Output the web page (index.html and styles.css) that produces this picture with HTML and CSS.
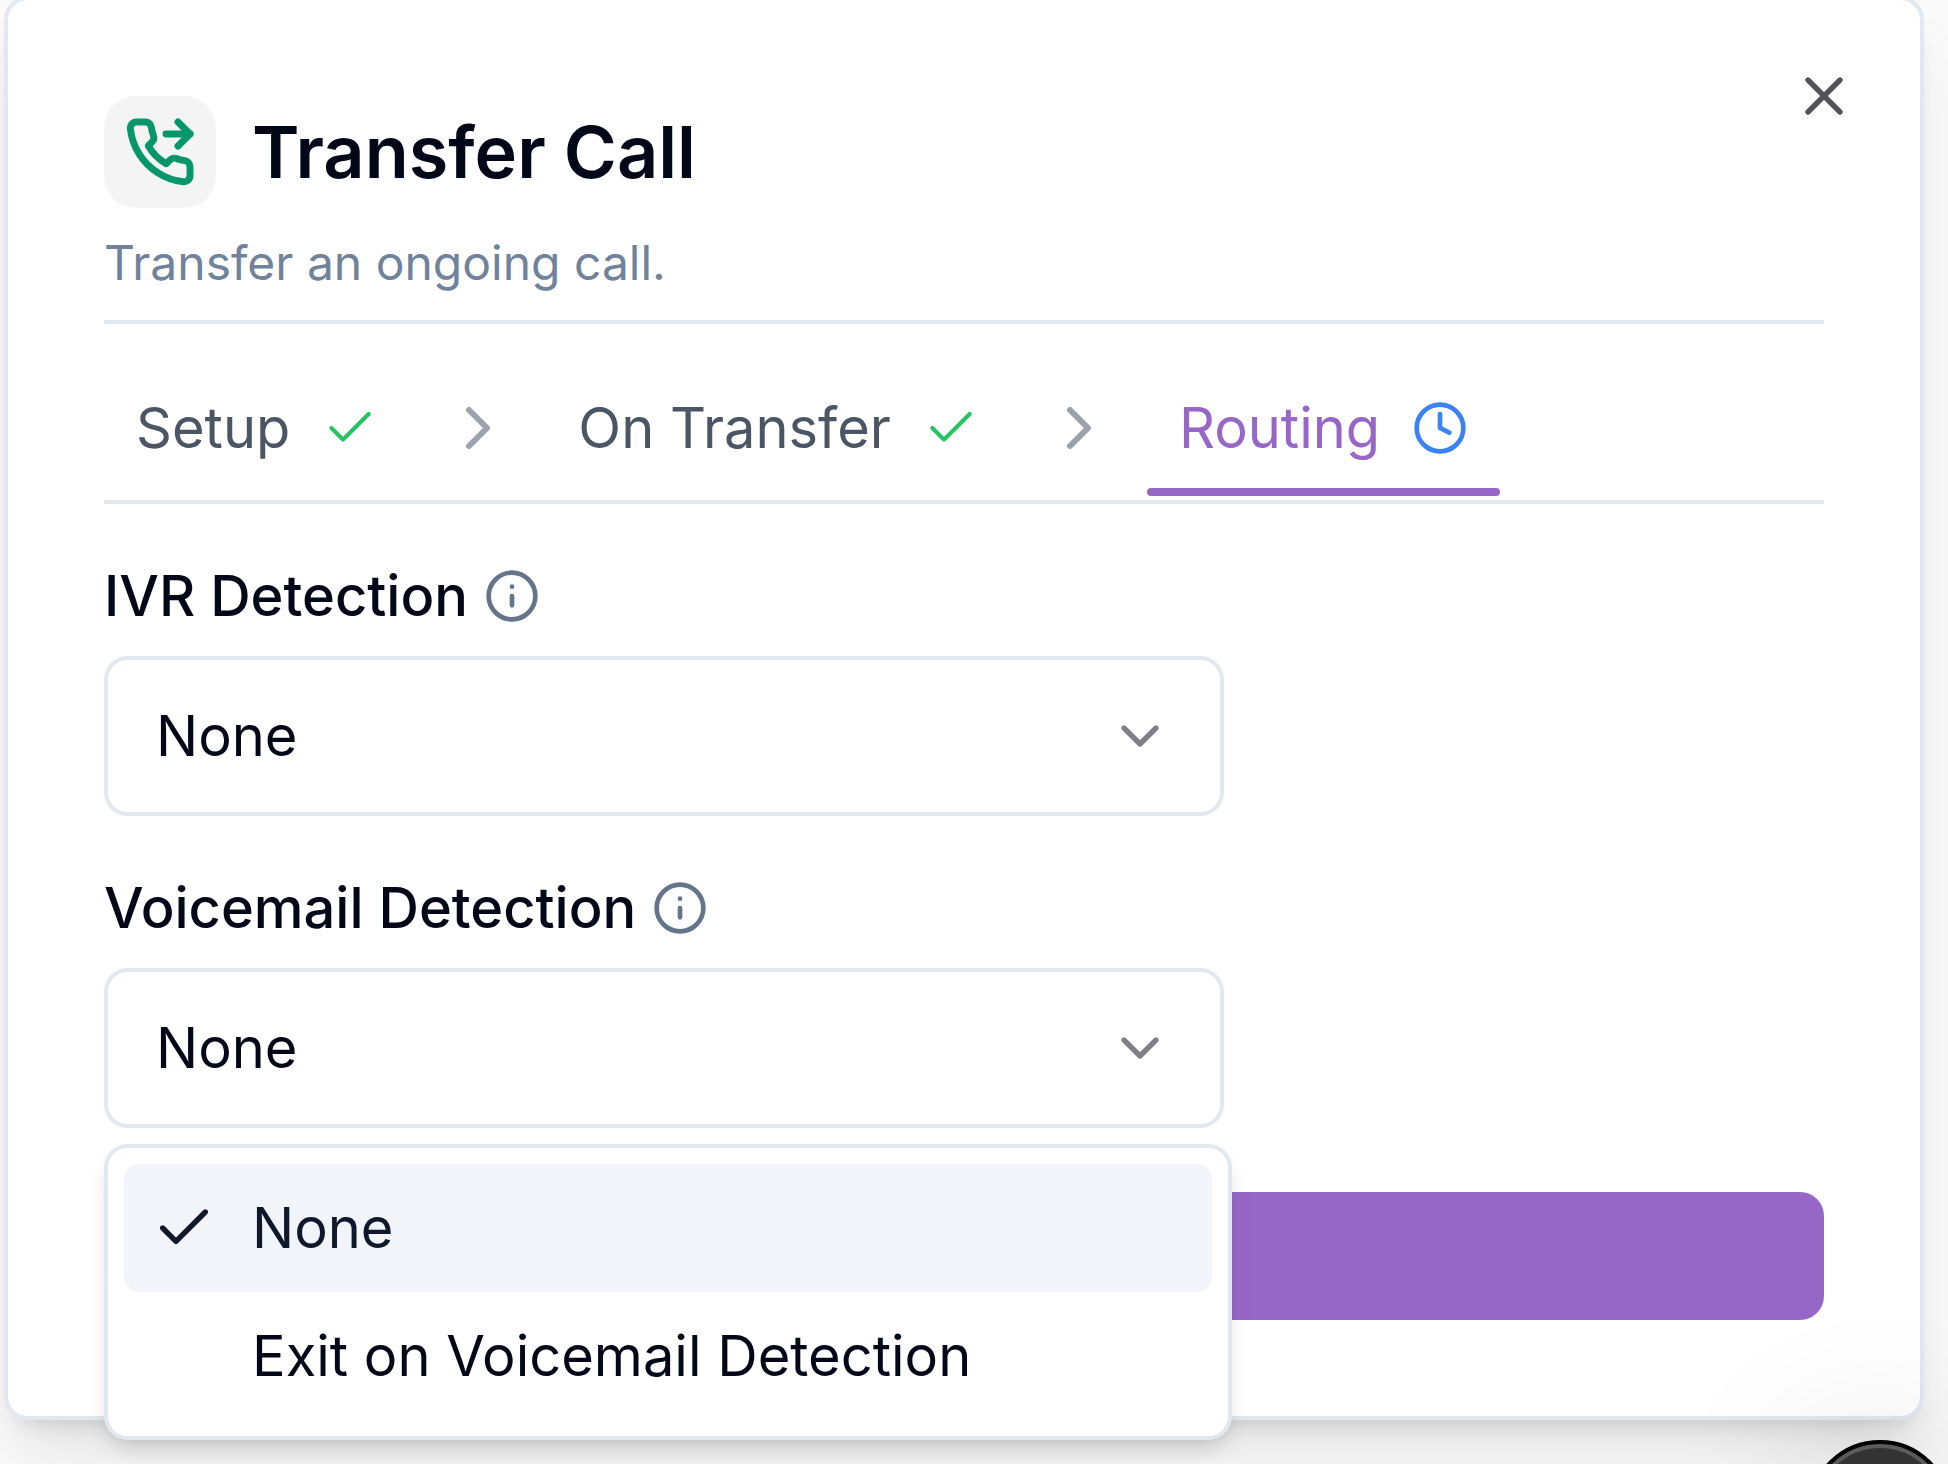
FILE: index.html
```html
<!DOCTYPE html>
<html lang="en">
<head>
<meta charset="utf-8">
<meta name="viewport" content="width=device-width, initial-scale=1">
<title>Transfer Call</title>
<link rel="stylesheet" href="styles.css">
</head>
<body>
<main class="dialog" role="dialog" aria-labelledby="dialog-title">
  <button class="close" type="button" aria-label="Close">
    <svg class="icon icon-md" viewBox="0 0 24 24"><path d="M18 6 6 18"/><path d="m6 6 12 12"/></svg>
  </button>

  <header class="header">
    <div class="heading">
      <span class="tile">
        <svg class="icon icon-lg phone" viewBox="0 0 24 24"><path d="m18 2 4 4-4 4"/><path d="M14 6h8"/><path d="M22 16.92v3a2 2 0 0 1-2.18 2 19.79 19.79 0 0 1-8.63-3.07 19.5 19.5 0 0 1-6-6 19.79 19.79 0 0 1-3.07-8.67A2 2 0 0 1 4.11 2h3a2 2 0 0 1 2 1.72 12.84 12.84 0 0 0 .7 2.81 2 2 0 0 1-.45 2.11L8.09 9.91a16 16 0 0 0 6 6l1.27-1.27a2 2 0 0 1 2.11-.45 12.84 12.84 0 0 0 2.81.7A2 2 0 0 1 22 16.92z"/></svg>
      </span>
      <h1 class="title" id="dialog-title">Transfer Call</h1>
    </div>
    <p class="subtitle">Transfer an ongoing call.</p>
  </header>

  <nav class="steps" aria-label="Steps">
    <button class="step" type="button">Setup
      <svg class="icon icon-sm done" viewBox="0 0 24 24"><path d="M20 6 9 17l-5-5"/></svg>
    </button>
    <svg class="icon icon-lg separator" viewBox="0 0 24 24"><path d="m9 18 6-6-6-6"/></svg>
    <button class="step" type="button">On Transfer
      <svg class="icon icon-sm done" viewBox="0 0 24 24"><path d="M20 6 9 17l-5-5"/></svg>
    </button>
    <svg class="icon icon-lg separator" viewBox="0 0 24 24"><path d="m9 18 6-6-6-6"/></svg>
    <button class="step current" type="button" aria-current="step">Routing
      <svg class="icon icon-sm pending" viewBox="0 0 24 24"><circle cx="12" cy="12" r="10"/><path d="M12 6v6l4 2"/></svg>
    </button>
  </nav>

  <form class="form">
    <div class="field">
      <div class="label-row">
        <label class="label" for="ivr">IVR Detection</label>
        <svg class="icon icon-sm info" viewBox="0 0 24 24"><circle cx="12" cy="12" r="10"/><path d="M12 16v-4"/><path d="M12 8h.01"/></svg>
      </div>
      <div class="select-box">
        <select class="select" id="ivr"><option>None</option></select>
        <svg class="icon icon-md arrow" viewBox="0 0 24 24"><path d="m6 9 6 6 6-6"/></svg>
      </div>
    </div>

    <div class="field">
      <div class="label-row">
        <label class="label" for="voicemail">Voicemail Detection</label>
        <svg class="icon icon-sm info" viewBox="0 0 24 24"><circle cx="12" cy="12" r="10"/><path d="M12 16v-4"/><path d="M12 8h.01"/></svg>
      </div>
      <div class="select-box">
        <select class="select" id="voicemail"><option>None</option><option>Exit on Voicemail Detection</option></select>
        <svg class="icon icon-md arrow" viewBox="0 0 24 24"><path d="m6 9 6 6 6-6"/></svg>
      </div>
      <ul class="menu" role="listbox" aria-label="Voicemail Detection">
        <li class="option selected" role="option" aria-selected="true">
          <svg class="icon icon-md" viewBox="0 0 24 24"><path d="M20 6 9 17l-5-5"/></svg>
          None
        </li>
        <li class="option" role="option" aria-selected="false">
          <span class="icon-md"></span>
          Exit on Voicemail Detection
        </li>
      </ul>
    </div>

    <button class="submit" type="submit" aria-label="Save"></button>
  </form>
</main>
<button class="chat" type="button" aria-label="Open chat"></button>
</body>
</html>
```

FILE: styles.css
```css
* {
  box-sizing: border-box;
}

body {
  display: flow-root;
  min-height: 100vh;
  margin: 0;
  overflow: hidden;
  background: #fafafa;
  color: #020817;
  font-family: Inter, "Liberation Sans", sans-serif;
  font-size: 56px;
  line-height: 80px;
}

button,
select {
  font: inherit;
  color: inherit;
  margin: 0;
  padding: 0;
  border: 0;
  background: none;
}

.icon {
  display: block;
  flex: none;
  fill: none;
  stroke: currentColor;
  stroke-width: 2;
  stroke-linecap: round;
  stroke-linejoin: round;
}

.icon-sm { width: 56px; height: 56px; }
.icon-md { width: 64px; height: 64px; }
.icon-lg { width: 72px; height: 72px; }

.dialog {
  position: relative;
  margin: -4px 24px 0 4px;
  padding: 96px;
  border: 4px solid #e2e8f0;
  border-radius: 24px;
  background: #fff;
  box-shadow: 0 40px 60px -12px rgba(0, 0, 0, 0.1), 0 16px 24px -16px rgba(0, 0, 0, 0.16);
}

.close {
  position: absolute;
  top: 64px;
  right: 64px;
  color: #52525b;
}

.header {
  display: flex;
  flex-direction: column;
  gap: 24px;
  padding-bottom: 26px;
  border-bottom: 4px solid #e2e8f0;
}

.heading {
  display: flex;
  align-items: center;
  gap: 36px;
}

.tile {
  display: grid;
  place-items: center;
  width: 112px;
  height: 112px;
  border-radius: 32px;
  background: #f4f4f5;
  color: #059669;
}

.phone { stroke-width: 2.3; }

.title {
  margin: 0;
  font-size: 72px;
  font-weight: 600;
  line-height: 72px;
}

.subtitle {
  margin: 0;
  color: #71829b;
  font-size: 48px;
  line-height: 62px;
}

.steps {
  display: flex;
  align-items: center;
  gap: 32px;
  padding: 36px 0 4px;
  border-bottom: 4px solid #e2e8f0;
}

.step {
  display: flex;
  align-items: center;
  gap: 32px;
  padding: 28px 32px;
  color: #4b5563;
}

.current {
  position: relative;
  color: #9767c8;
}

.current::after {
  content: "";
  position: absolute;
  right: 0;
  bottom: 0;
  left: 0;
  height: 8px;
  border-radius: 4px;
  background: #9767c8;
}

.done {
  color: #22c55e;
  stroke-width: 1.75;
}

.pending { color: #3b82f6; }
.separator { color: #9ca3af; }
.info { color: #64748b; }

.form {
  display: flex;
  flex-direction: column;
  gap: 64px;
  padding-top: 64px;
}

.field {
  position: relative;
  display: flex;
  flex-direction: column;
  gap: 32px;
  max-width: 1120px;
}

.label-row {
  display: flex;
  align-items: center;
  gap: 16px;
}

.label {
  font-weight: 500;
  line-height: 56px;
}

.select-box {
  display: grid;
  align-items: center;
}

.select,
.arrow {
  grid-area: 1 / 1;
}

.select {
  appearance: none;
  width: 100%;
  height: 160px;
  padding: 0 48px;
  border: 4px solid #e2e8f0;
  border-radius: 24px;
  background: #fff;
}

.arrow {
  justify-self: end;
  margin-right: 52px;
  color: #808087;
  pointer-events: none;
}

.menu {
  position: absolute;
  top: 100%;
  right: -8px;
  left: 0;
  z-index: 1;
  margin: 16px 0 0;
  padding: 16px;
  border: 4px solid #e2e8f0;
  border-radius: 24px;
  background: #fff;
  list-style: none;
  box-shadow: 0 16px 24px -4px rgba(0, 0, 0, 0.1), 0 8px 16px -8px rgba(0, 0, 0, 0.1);
}

.option {
  display: flex;
  align-items: center;
  gap: 36px;
  padding: 24px 28px;
  border-radius: 16px;
}

.selected {
  background: #f1f5f9;
  color: #0f172a;
}

.submit {
  height: 128px;
  border-radius: 24px;
  background: #9767c8;
}

.chat {
  position: fixed;
  right: -4px;
  bottom: -120px;
  width: 144px;
  height: 144px;
  border: 4px solid #000;
  border-radius: 50%;
  background: #333;
  box-shadow: inset 0 0 0 4px #5c5c5c, 0 4px 160px rgba(0, 0, 0, 0.16);
}
```
